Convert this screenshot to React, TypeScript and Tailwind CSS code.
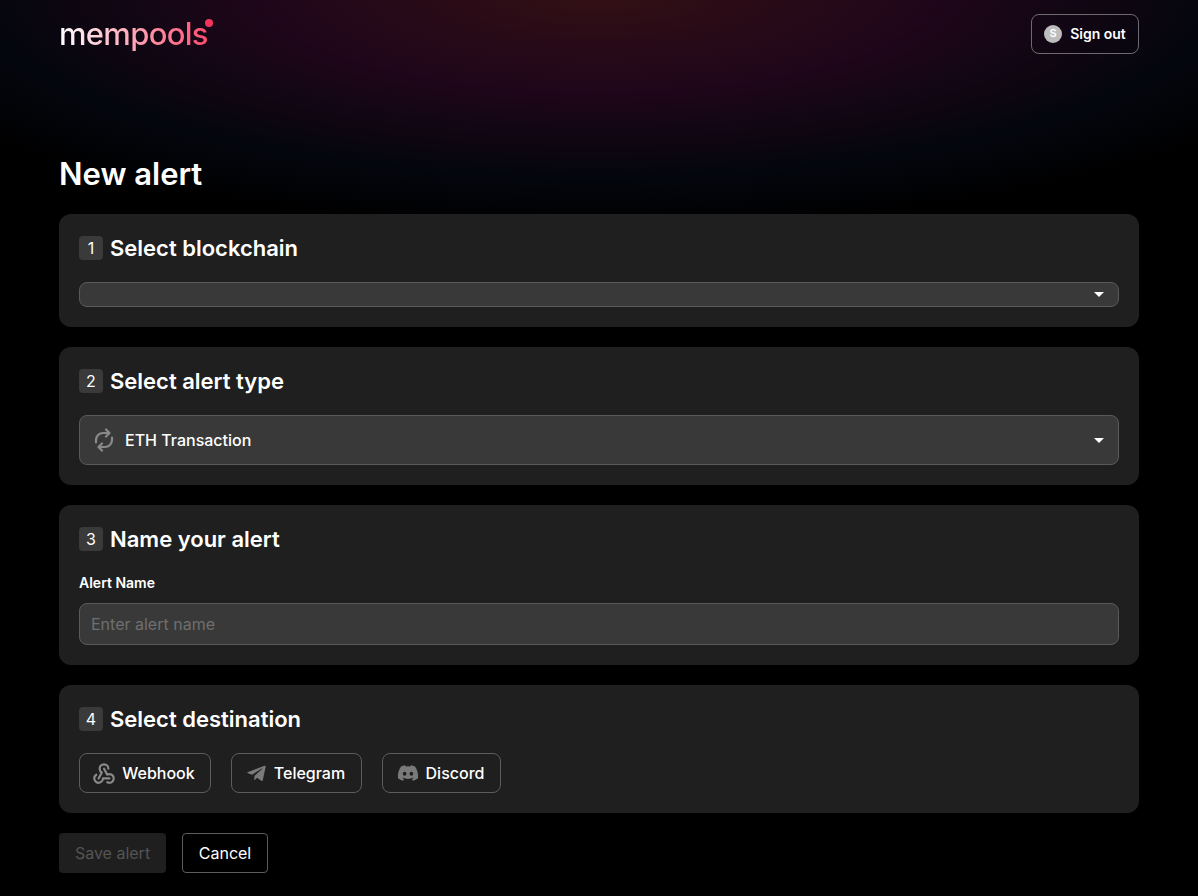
import type { ReactNode } from "react";
import { FaDiscord, FaTelegramPlane } from "react-icons/fa";
import { TbWebhook } from "react-icons/tb";

function Caret() {
  return <span className="h-0 w-0 border-x-[5px] border-t-[5px] border-x-transparent border-t-white" />;
}

function SyncIcon() {
  return (
    <svg width="24" height="24" viewBox="0 0 24 24" fill="none" stroke="#8a8a8a" strokeWidth="2.2" strokeLinecap="round" strokeLinejoin="round">
      <path d="M4 14.5V12a7 7 0 0 1 7-7h6" />
      <path d="M14 1.5 17.5 5 14 8.5" />
      <path d="M20 9.5V12a7 7 0 0 1-7 7H7" />
      <path d="M10 15.5 6.5 19l3.5 3.5" />
    </svg>
  );
}

function Card({ step, title, children }: { step: number; title: string; children: ReactNode }) {
  return (
    <section className="rounded-xl bg-white/12 p-5">
      <div className="mb-5 flex h-7 items-center gap-[7px]">
        <span className="flex h-6 w-6 items-center justify-center rounded bg-[#3a3a3a] text-base text-white">{step}</span>
        <h2 className="text-[22px] font-semibold leading-7 text-white">{title}</h2>
      </div>
      {children}
    </section>
  );
}

function DestButton({ icon, label, width }: { icon: ReactNode; label: string; width: string }) {
  return (
    <button className={`flex h-10 items-center justify-center gap-[7px] rounded-lg border border-[#5c5c5c] pr-0.5 text-base font-medium text-white ${width}`}>
      {icon}
      {label}
    </button>
  );
}

export default function App() {
  return (
    <div className="min-h-[896px] bg-black bg-[radial-gradient(ellipse_800px_240px_at_50%_-10px,#331014_0%,#1f061a_42%,#04060d_78%,#000000_100%)] px-[59px] pb-[23px] font-['Inter',sans-serif]">
      <header className="flex h-[68px] items-start justify-between pt-[14px]">
        <div className="relative h-10 w-[155px]">
          <span className="absolute left-0 top-0 bg-[linear-gradient(90deg,#ffffff_0%,#ff4d6d_100%)] bg-clip-text text-[31px] font-medium leading-10 tracking-[-0.7px] text-transparent">
            mempools
          </span>
          <span className="absolute left-[146px] top-[5px] h-2 w-2 rounded-full bg-[#f5345e]" />
        </div>
        <button className="flex h-10 w-[108px] items-center justify-center gap-2 rounded-lg border border-[#6e6a70] text-sm font-semibold text-white">
          <span className="flex h-[18px] w-[18px] items-center justify-center rounded-full bg-[#bdbdbd] text-[11px] text-white">S</span>
          Sign out
        </button>
      </header>

      <h1 className="flex h-[146px] items-end pb-[20px] text-[31px] font-semibold leading-10 text-white">New alert</h1>

      <div className="flex flex-col gap-5">
        <Card step={1} title="Select blockchain">
          <div className="flex h-[25px] items-center justify-end rounded-lg border border-[#5a5a5a] bg-[#393939] pr-3.5">
            <Caret />
          </div>
        </Card>

        <Card step={2} title="Select alert type">
          <div className="flex h-[50px] items-center gap-[9px] rounded-lg border border-[#5a5a5a] bg-[#393939] pl-[12px] pr-3.5">
            <SyncIcon />
            <span className="flex-1 text-base font-medium text-white">ETH Transaction</span>
            <Caret />
          </div>
        </Card>

        <Card step={3} title="Name your alert">
          <label className="mb-2.5 block text-sm font-semibold leading-5 text-white">Alert Name</label>
          <input
            placeholder="Enter alert name"
            className="block h-[42px] w-full rounded-lg border border-[#5a5a5a] bg-[#393939] px-[11px] text-base text-white outline-none placeholder:text-[#6f6f6f]"
          />
        </Card>

        <Card step={4} title="Select destination">
          <div className="flex gap-5">
            <DestButton width="w-[132px]" label="Webhook" icon={<TbWebhook size={26} color="#8a8a8a" className="-mx-0.5" />} />
            <DestButton width="w-[131px]" label="Telegram" icon={<FaTelegramPlane size={21} color="#7a7a7a" />} />
            <DestButton width="w-[119px]" label="Discord" icon={<FaDiscord size={22} color="#7a7a7a" />} />
          </div>
        </Card>
      </div>

      <div className="mt-5 flex gap-4">
        <button className="h-10 w-[107px] rounded bg-[#1f1f1f] text-base text-[#545454]">Save alert</button>
        <button className="h-10 w-[86px] rounded border border-[#5c5c5c] text-base text-white">Cancel</button>
      </div>
    </div>
  );
}
